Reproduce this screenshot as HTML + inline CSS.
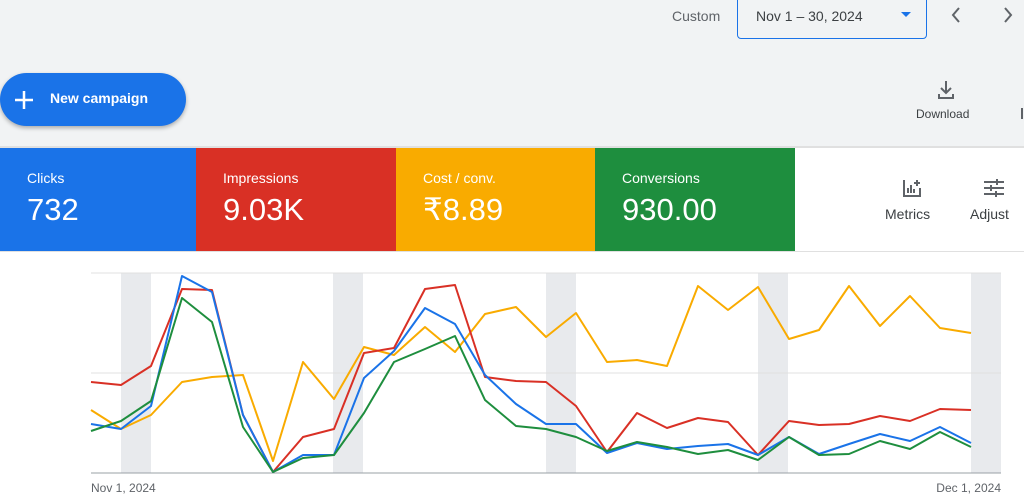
<!DOCTYPE html>
<html><head><style>
body{margin:0;width:1024px;height:496px;overflow:hidden;background:#f1f3f4;font-family:"Liberation Sans",Arial,sans-serif;position:relative}
.a{position:absolute}
.card{position:absolute;top:148px;height:103px;color:#fff}
.card .l{position:absolute;left:27px;top:22px;font-size:14px}
.card .v{position:absolute;left:27px;top:44px;font-size:31px}
</style></head><body>
<div class="a" style="left:672px;top:8px;font-size:14px;color:#5f6368">Custom</div>
<div class="a" style="left:737px;top:-4px;width:190px;height:43px;border:1.5px solid #1a73e8;border-radius:4px;box-sizing:border-box"></div>
<div class="a" style="left:756px;top:8px;font-size:14px;color:#3c4043">Nov 1 – 30, 2024</div>
<div class="a" style="left:901px;top:12px;width:0;height:0;border-left:5px solid transparent;border-right:5px solid transparent;border-top:5px solid #1a73e8"></div>
<svg class="a" style="left:946px;top:5px" width="20" height="20"><path d="M13 3 L7 10 L13 17" stroke="#5f6368" stroke-width="2" fill="none"/></svg>
<svg class="a" style="left:998px;top:5px" width="20" height="20"><path d="M7 3 L13 10 L7 17" stroke="#5f6368" stroke-width="2" fill="none"/></svg>
<div class="a" style="left:0;top:73px;width:186px;height:53px;background:#1a73e8;border-radius:27px;box-shadow:0 2px 4px rgba(0,0,0,.3)"></div>
<svg class="a" style="left:13px;top:89px" width="22" height="22"><path d="M11 2V20M2 11H20" stroke="#fff" stroke-width="2.5"/></svg>
<div class="a" style="left:50px;top:90px;font-size:14px;color:#fff;font-weight:bold">New campaign</div>
<svg class="a" style="left:936px;top:79px" width="20" height="22"><path d="M10 2V13M5 9L10 14L15 9M3 15V19H17V15" stroke="#5f6368" stroke-width="2" fill="none"/></svg>
<div class="a" style="left:916px;top:107px;font-size:12px;color:#3c4043">Download</div>
<div class="a" style="left:1021px;top:108px;width:2px;height:11px;background:#5f6368"></div>
<div class="a" style="left:0;top:146px;width:1024px;height:2px;background:#e0e0e0"></div>
<div class="card" style="left:0;width:196px;background:#1a73e8"><div class="l">Clicks</div><div class="v">732</div></div>
<div class="card" style="left:196px;width:200px;background:#d93025"><div class="l">Impressions</div><div class="v">9.03K</div></div>
<div class="card" style="left:396px;width:199px;background:#f9ab00"><div class="l">Cost / conv.</div><div class="v">₹8.89</div></div>
<div class="card" style="left:595px;width:200px;background:#1e8e3e"><div class="l">Conversions</div><div class="v">930.00</div></div>
<div class="card" style="left:795px;width:229px;background:#fff;color:#3c4043">
<svg class="a" style="left:106px;top:28px" width="24" height="24"><path d="M3 4V20H19V12M7 12V17M10 9V17M13 13V17M16 4V10M13 7H19" stroke="#5f6368" stroke-width="2" fill="none"/></svg>
<div class="a" style="left:90px;top:58px;font-size:14px">Metrics</div>
<svg class="a" style="left:187px;top:28px" width="24" height="24"><path d="M2 6H22M2 12H22M2 18H22M15 3V9M9 9V15M14 15V21" stroke="#5f6368" stroke-width="2" fill="none"/></svg>
<div class="a" style="left:175px;top:58px;font-size:14px">Adjust</div>
</div>
<div class="a" style="left:0;top:251px;width:1024px;height:245px;background:#fff;border-top:1px solid #e0e0e0"></div>
<svg class="a" style="left:0;top:0" width="1024" height="496">
<g fill="#e8eaed"><rect x="121" y="273" width="30" height="200"/><rect x="333" y="273" width="30" height="200"/><rect x="546" y="273" width="30" height="200"/><rect x="758" y="273" width="30" height="200"/><rect x="971" y="273" width="30" height="200"/></g>
<path d="M91 273H1001M91 373H1001" stroke="#e0e0e0" stroke-width="1"/>
<path d="M91 473H1001" stroke="#9aa0a6" stroke-width="1"/>
<g fill="none" stroke-width="2" stroke-linejoin="round">
<polyline stroke="#f9ab00" points="91,410 121,429 151,415 182,382 212,377 243,375 273,461 303,362 334,399 364,347 394,355 425,327 455,352 485,314 516,307 546,337 576,313 607,362 637,360 667,366 698,286 728,310 758,287 789,339 819,330 849,286 880,326 910,296 940,328 971,333"/>
<polyline stroke="#d93025" points="91,382 121,385 151,366 182,289 212,290 243,415 273,472 303,437 334,429 364,353 394,348 425,289 455,285 485,377 516,381 546,382 576,406 607,452 637,413 667,428 698,418 728,422 758,455 789,421 819,425 849,424 880,416 910,421 940,409 971,410"/>
<polyline stroke="#1a73e8" points="91,424 121,429 151,406 182,276 212,292 243,415 273,472 303,455 334,455 364,378 394,351 425,308 455,324 485,375 516,404 546,424 576,424 607,453 637,443 667,449 698,446 728,444 758,455 789,437 819,454 849,444 880,434 910,441 940,427 971,443"/>
<polyline stroke="#1e8e3e" points="91,431 121,421 151,401 182,298 212,322 243,427 273,472 303,458 334,455 364,413 394,362 425,349 455,336 485,400 516,426 546,429 576,437 607,451 637,442 667,447 698,454 728,450 758,460 789,437 819,455 849,454 880,441 910,449 940,432 971,447"/>
</g>
<text x="91" y="492" font-size="12" fill="#5f6368" font-family="Liberation Sans">Nov 1, 2024</text>
<text x="1001" y="492" font-size="12" fill="#5f6368" text-anchor="end" font-family="Liberation Sans">Dec 1, 2024</text>
</svg>
</body></html>
